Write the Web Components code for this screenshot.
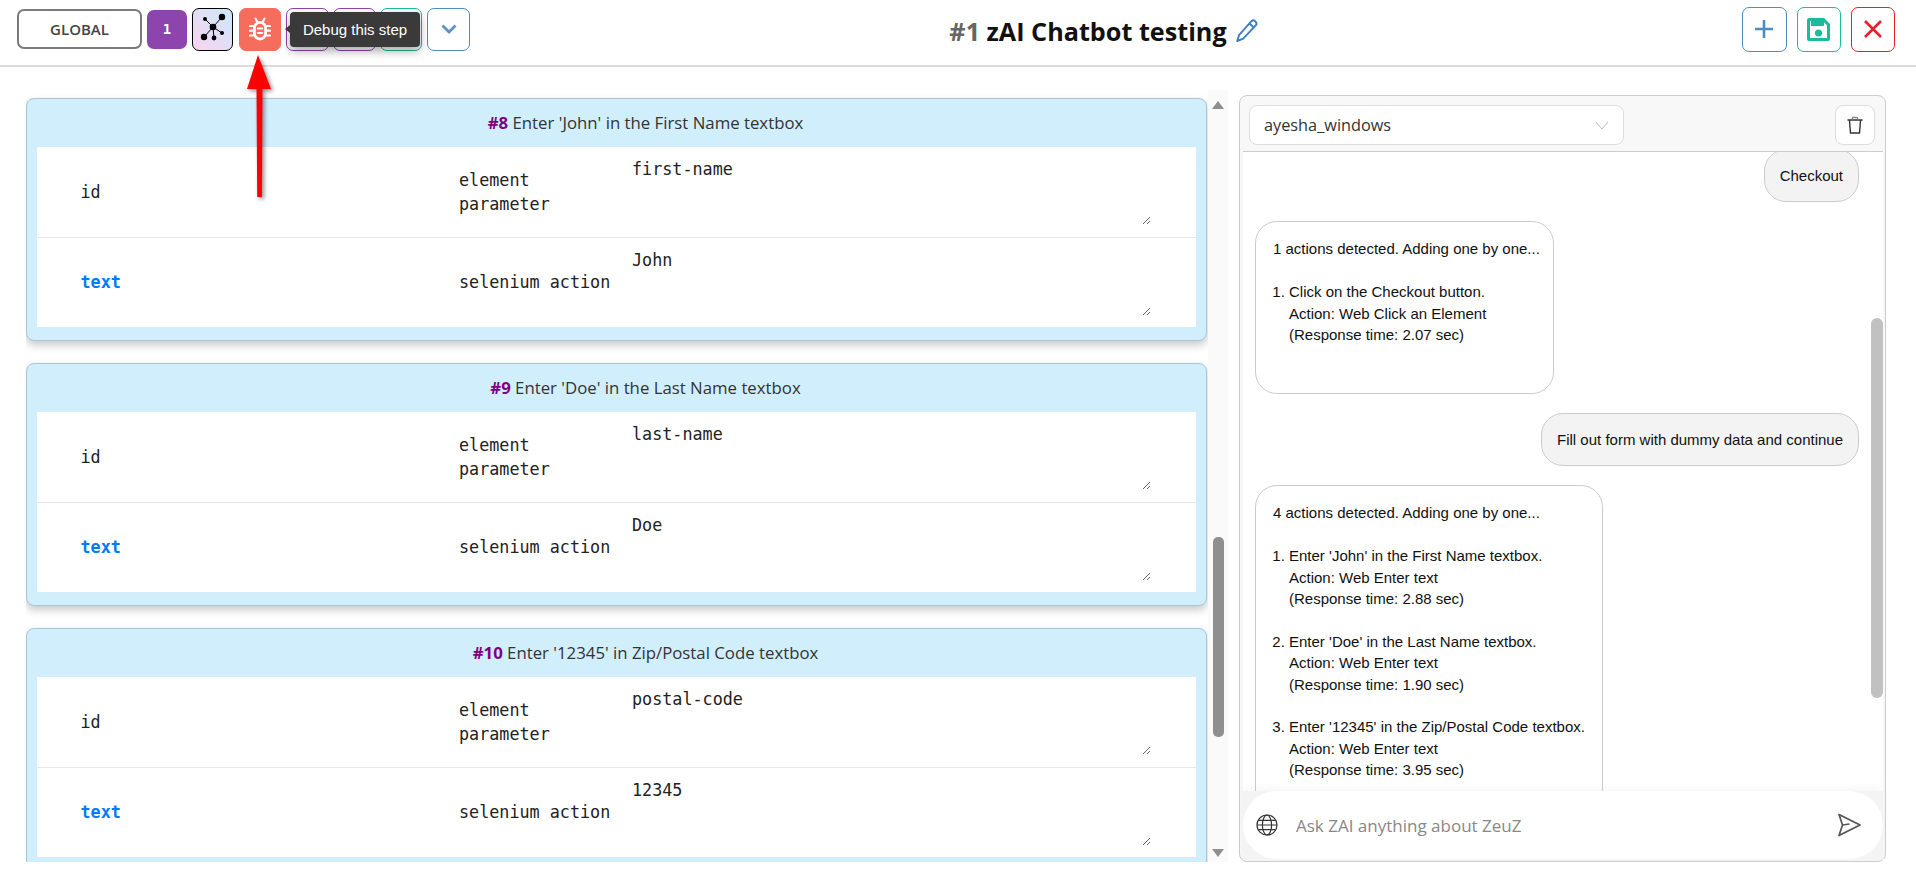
<!DOCTYPE html>
<html>
<head>
<meta charset="utf-8">
<title>zAI Chatbot testing</title>
<style>
  html, body { margin: 0; height: 100%; background: #fff; overflow: hidden; }
  body { font-family: "Open Sans", "Liberation Sans", sans-serif; }
</style>
</head>
<body>
<test-page></test-page>
<script>
class IconBtn extends HTMLElement {
  connectedCallback() {
    this.attachShadow({ mode: 'open' });
    this.shadowRoot.innerHTML = `
      <style>
        :host {
          display: flex;
          align-items: center;
          justify-content: center;
          box-sizing: border-box;
          width: var(--w, 43px);
          height: var(--h, 43px);
          border: 1px solid var(--c, #4f8cc0);
          border-radius: 7px;
          background: var(--bg, #fff);
          flex: none;
        }
      </style>
      <slot></slot>
    `;
  }
}
customElements.define('icon-btn', IconBtn);

class AppHeader extends HTMLElement {
  connectedCallback() {
    this.attachShadow({ mode: 'open' });
    this.shadowRoot.innerHTML = `
      <style>
        :host {
          display: flex;
          align-items: center;
          justify-content: space-between;
          box-sizing: border-box;
          height: 67px;
          padding: 0 21px 7px 17px;
          border-bottom: 2px solid #dcdcdc;
          background: #fff;
          position: relative;
        }
        .tools { display: flex; align-items: center; }
        .global {
          box-sizing: border-box;
          width: 125px;
          height: 40px;
          border: 2px solid #7a7a7a;
          border-radius: 7px;
          display: flex;
          align-items: center;
          justify-content: center;
          font: 600 15px "Open Sans", sans-serif;
          color: #444;
          margin-right: 5px;
        }
        .count {
          width: 40px;
          height: 39px;
          border-radius: 7px;
          background: #8e44ad;
          color: #fff;
          display: flex;
          align-items: center;
          justify-content: center;
          font: bold 14px "DejaVu Sans Mono", monospace;
          margin-right: 5px;
        }
        .graph { --w: 41px; --c: #000; --bg: linear-gradient(45deg, #fbd3ee, #c9e9fc); margin-right: 6px; }
        .bug { --w: 42px; --c: #f66c5d; --bg: #f66c5d; margin-right: 5px; }
        .mid { margin-right: 4px; --c: #8e44ad; }
        .teal { margin-right: 5px; --w: 42px; --c: #1abc9c; }
        .tip {
          position: absolute;
          left: 290px;
          top: 12px;
          width: 130px;
          height: 35px;
          box-sizing: border-box;
          background: #3a3a3a;
          color: #fff;
          border-radius: 4px;
          font: 15px "Liberation Sans", sans-serif;
          display: flex;
          align-items: center;
          justify-content: center;
          box-shadow: 0 4px 10px rgba(0,0,0,.35);
        }
        .tip:before {
          content: '';
          position: absolute;
          left: -5px;
          top: 13px;
          border-style: solid;
          border-width: 4.5px 5px 4.5px 0;
          border-color: transparent #3a3a3a transparent transparent;
        }
        h1 {
          margin: 3px 4px 0 0;
          font: bold 25.2px "Open Sans", sans-serif;
          color: #111;
          display: flex;
          align-items: center;
          white-space: pre;
        }
        h1 span { color: #666; }
        h1 svg { margin-left: 8px; }
        .right { display: flex; gap: 10px; align-items: center; }
        .right icon-btn { --w: 45px; --h: 45px; }
        .right .save { --w: 44px; --c: #1abc9c; }
        .right .close { --w: 44px; --c: #e8202a; }
      </style>
      <div class="tools">
        <div class="global">GLOBAL</div>
        <div class="count">1</div>
        <icon-btn class="graph">
          <svg width="39" height="41" viewBox="0 0 39 41">
            <g stroke="#000" stroke-width="1">
              <path d="M20 18 29 8M20 18 12 10M20 18 29 24M20 18 21 29M20 18 11 28"/>
            </g>
            <circle cx="20" cy="18" r="3.3"/><circle cx="29" cy="8" r="3.2"/><circle cx="12" cy="10" r="2"/>
            <circle cx="29" cy="24" r="2"/><circle cx="21" cy="29" r="2.4"/><circle cx="11" cy="28" r="3.2"/>
          </svg>
        </icon-btn>
        <icon-btn class="bug">
          <svg width="22" height="24" viewBox="0 0 22 24" fill="none" stroke="#fff" stroke-linecap="round">
            <rect x="5.4" y="5.4" width="11.2" height="16.6" rx="5.6" stroke-width="2.8"/>
            <path d="M8.8 11.5h4.4M8.8 16h4.4" stroke-width="2.2"/>
            <path d="M1 9h3M1 13.7h3M1 18.5h3M18 9h3M18 13.7h3M18 18.5h3" stroke-width="2.2"/>
            <path d="M6.5 1.5 8 4.5M15.5 1.5 14 4.5" stroke-width="2"/>
          </svg>
        </icon-btn>
        <icon-btn class="mid"></icon-btn>
        <icon-btn class="mid"></icon-btn>
        <icon-btn class="teal"></icon-btn>
        <icon-btn>
          <svg width="18" height="12" viewBox="0 0 18 12" fill="none" stroke="#5b93c6" stroke-width="2.8">
            <path d="M2.5 2.5 9 9l6.5-6.5"/>
          </svg>
        </icon-btn>
      </div>
      <div class="tip">Debug this step</div>
      <h1><span>#1 </span>zAI Chatbot testing<svg width="24" height="25" viewBox="0 0 24 25" fill="none" stroke="#3a7fc1" stroke-width="1.9" stroke-linejoin="round">
          <path d="M16.5 3.2a2.6 2.6 0 0 1 3.6 0l.6.6a2.6 2.6 0 0 1 0 3.6L8.2 20.6 2.2 23l2-6.2zM14.5 5.5l4.6 4.2"/>
        </svg></h1>
      <div class="right">
        <icon-btn>
          <svg width="20" height="20" viewBox="0 0 20 20" stroke="#4f8cc0" stroke-width="2.6"><path d="M10 1v18M1 10h18"/></svg>
        </icon-btn>
        <icon-btn class="save">
          <svg width="23" height="23" viewBox="0 0 23 23">
            <path fill="#1abc9c" fill-rule="evenodd" d="M2 0h15l6 6v15a2 2 0 0 1-2 2H2a2 2 0 0 1-2-2V2a2 2 0 0 1 2-2zM3 3v17h17V7.2L15.8 3z"/>
            <rect x="4" y="3" width="13" height="5" fill="#1abc9c"/>
            <circle cx="11.5" cy="15" r="3.6" fill="#1abc9c"/>
          </svg>
        </icon-btn>
        <icon-btn class="close">
          <svg width="18" height="18" viewBox="0 0 18 18" stroke="#e8202a" stroke-width="2.6"><path d="M1 1l16 16M17 1 1 17"/></svg>
        </icon-btn>
      </div>
    `;
  }
}
customElements.define('app-header', AppHeader);

class StepRow extends HTMLElement {
  connectedCallback() {
    const kind = this.getAttribute('kind');
    const name = this.getAttribute('name');
    const value = this.getAttribute('value');
    this.attachShadow({ mode: 'open' });
    this.shadowRoot.innerHTML = `
      <style>
        :host {
          display: grid;
          grid-template-columns: 422px 174px 1fr;
          align-items: center;
          box-sizing: border-box;
          height: 89px;
          padding-bottom: 2px;
          background: #fff;
          font: 16.75px/24px "DejaVu Sans Mono", "Liberation Mono", monospace;
          color: #222;
        }
        :host(:not(:last-child)) { height: 91px; padding-bottom: 0; border-bottom: 1px solid #e8e8e8; }
        .kind { padding-left: 43.5px; }
        :host([link]) .kind { color: #007bff; font-weight: bold; }
        .name { width: 160px; }
        textarea {
          display: block;
          box-sizing: border-box;
          align-self: start;
          width: 519px;
          height: 68px;
          margin: 10px 0 0 -1px;
          padding: 0;
          border: 0;
          outline: 0;
          background: transparent;
          color: #222;
          font: inherit;
          resize: vertical;
          overflow: hidden;
        }
      </style>
      <div class="kind">${kind}</div>
      <div class="name">${name}</div>
      <textarea>${value}</textarea>
    `;
  }
}
customElements.define('step-row', StepRow);

class StepCard extends HTMLElement {
  connectedCallback() {
    this.attachShadow({ mode: 'open' });
    this.shadowRoot.innerHTML = `
      <style>
        :host {
          display: block;
          flex: none;
          box-sizing: border-box;
          width: 1181px;
          height: 243px;
          padding: 0 10px 13px;
          background: #d1eefd;
          border: 1px solid #a8c6d8;
          border-radius: 8px;
          box-shadow: 0 4px 9px rgba(0,0,0,.22);
        }
        .head {
          height: 48px;
          box-sizing: border-box;
          padding: 0 0 2px 58px;
          display: flex;
          align-items: center;
          justify-content: center;
          white-space: pre;
          font: 16.8px "Open Sans", sans-serif;
          color: #333;
        }
        b { color: #800080; }
      </style>
      <div class="head"><b>#${this.getAttribute('num')}</b> ${this.getAttribute('label')}</div>
      <slot></slot>
    `;
  }
}
customElements.define('step-card', StepCard);

class StepList extends HTMLElement {
  connectedCallback() {
    this.attachShadow({ mode: 'open' });
    this.shadowRoot.innerHTML = `
      <style>
        :host {
          display: flex;
          flex: none;
          box-sizing: border-box;
          width: 1202px;
          margin-top: 23px;
          background: #fff;
          overflow: hidden;
        }
        .cards {
          flex: none;
          width: 1182px;
          display: flex;
          flex-direction: column;
          gap: 22px;
          padding: 8px 0 0;
          overflow: hidden;
        }
        .rail {
          flex: 1;
          display: flex;
          flex-direction: column;
          align-items: center;
          background: #fafafa;
          padding: 11px 0 5px;
        }
        .up, .down { width: 0; height: 0; border-style: solid; border-color: transparent; }
        .up { border-width: 0 6.5px 8px; border-bottom-color: #8f8f8f; }
        .down { border-width: 8px 6.5px 0; border-top-color: #8f8f8f; }
        .thumb { width: 11px; height: 200px; margin-top: 428px; border-radius: 5px; background: #8f8f8f; flex: none; }
        .space { flex: 1; }
      </style>
      <div class="cards"><slot></slot></div>
      <div class="rail">
        <div class="up"></div>
        <div class="thumb"></div>
        <div class="space"></div>
        <div class="down"></div>
      </div>
    `;
  }
}
customElements.define('step-list', StepList);

class ChatBubble extends HTMLElement {
  connectedCallback() {
    this.attachShadow({ mode: 'open' });
    this.shadowRoot.innerHTML = `
      <style>
        :host {
          display: block;
          flex: none;
          box-sizing: border-box;
          width: fit-content;
          border: 1px solid #ccc;
          border-radius: 22px;
          background: #fff;
          padding: 16px 17px;
          font: 15px/21.4px "Liberation Sans", Arial, sans-serif;
          color: #111;
        }
        :host([me]) {
          align-self: flex-end;
          background: #f3f3f3;
          padding: 15px;
        }
      </style>
      <slot></slot>
    `;
  }
}
customElements.define('chat-bubble', ChatBubble);

class ChatPanel extends HTMLElement {
  connectedCallback() {
    this.attachShadow({ mode: 'open' });
    this.shadowRoot.innerHTML = `
      <style>
        :host {
          display: flex;
          flex-direction: column;
          flex: none;
          box-sizing: border-box;
          width: 647px;
          margin-top: 28px;
          border: 1px solid #ccc;
          border-radius: 8px;
          background: #f8f8f8;
          padding: 0 2px 1px 3px;
          overflow: hidden;
        }
        .top {
          flex: none;
          height: 56px;
          box-sizing: border-box;
          padding: 9px 8px 0 6px;
          display: flex;
          justify-content: space-between;
          border-bottom: 1px solid #ccc;
        }
        .select, .trash {
          box-sizing: border-box;
          height: 40px;
          background: #fff;
          border: 1px solid #ddd;
          border-radius: 8px;
          display: flex;
          align-items: center;
        }
        .select {
          width: 375px;
          justify-content: space-between;
          padding: 0 14px;
          font: 16.3px "Open Sans", sans-serif;
          color: #333;
        }
        .trash { width: 40px; justify-content: center; }
        .body {
          flex: 1;
          min-height: 0;
          display: flex;
          background: #fff;
          overflow: hidden;
        }
        .msgs {
          flex: 1;
          min-width: 0;
          display: flex;
          flex-direction: column;
          gap: 19px;
          padding: 0 0 0 12px;
          margin-top: -3px;
        }
        .rail { flex: none; width: 24px; padding: 166px 0 0 12px; box-sizing: border-box; }
        .thumb { width: 12px; height: 380px; border-radius: 6px; background: #c1c1c1; }
        .foot {
          flex: none;
          position: relative;
          height: 69px;
          box-sizing: border-box;
          padding: 0 0 1px;
          background: #f4f4f4;
          box-shadow: 0 -3px 8px rgba(0,0,0,.04);
        }
        .pill {
          height: 68px;
          box-sizing: border-box;
          border-radius: 34px;
          background: #fff;
          display: flex;
          align-items: center;
          padding: 0 22px 0 13px;
          font: 17px "Open Sans", sans-serif;
          color: #888;
        }
        .pill .ph { flex: 1; margin-left: 18px; }
      </style>
      <div class="top">
        <div class="select">
          <span>ayesha_windows</span>
          <svg width="14" height="9" viewBox="0 0 14 9" fill="none" stroke="#bbb"><path d="M1 1l6 7 6-7"/></svg>
        </div>
        <div class="trash">
          <svg width="18" height="18" viewBox="0 0 18 18" fill="none" stroke="#333" stroke-width="1.4">
            <path d="M1.5 4h15M3.5 4.5l1 12.5h9l1-12.5"/>
            <path d="M6 3.5 7 1.5h4l1 2" stroke="#888"/>
          </svg>
        </div>
      </div>
      <div class="body">
        <div class="msgs"><slot></slot></div>
        <div class="rail"><div class="thumb"></div></div>
      </div>
      <div class="foot">
        <div class="pill">
          <svg width="22" height="22" viewBox="0 0 22 22" fill="none" stroke="#333" stroke-width="1.2">
            <circle cx="11" cy="11" r="10"/>
            <ellipse cx="11" cy="11" rx="4.6" ry="10"/>
            <path d="M1 11h20M2.2 6.3h17.6M2.2 15.7h17.6"/>
          </svg>
          <span class="ph">Ask ZAI anything about ZeuZ</span>
          <svg width="24" height="24" viewBox="0 0 24 24" fill="none" stroke="#555" stroke-width="1.7" stroke-linejoin="round">
            <path d="M2 1.5 23 12 2 22.5 5.5 12zM5.5 12l7-1"/>
          </svg>
        </div>
      </div>
    `;
  }
}
customElements.define('chat-panel', ChatPanel);

class ActionList extends HTMLElement {
  connectedCallback() {
    const items = JSON.parse(this.getAttribute('items'));
    this.attachShadow({ mode: 'open' });
    this.shadowRoot.innerHTML = `
      <style>
        :host { display: block; white-space: nowrap; }
        ol { margin: 21.4px 0 0; padding-left: 16px; }
        li { margin-bottom: 21.4px; }
      </style>
      <div>${this.getAttribute('lead')}</div>
      <ol>${items.map(i => `<li>${i[0]}<br>Action: ${i[1]}<br>(Response time: ${i[2]} sec)</li>`).join('')}</ol>
    `;
  }
}
customElements.define('action-list', ActionList);

class DebugArrow extends HTMLElement {
  connectedCallback() {
    this.attachShadow({ mode: 'open' });
    this.shadowRoot.innerHTML = `
      <style>
        :host { position: absolute; left: 240px; top: 50px; width: 40px; height: 156px; filter: drop-shadow(2px 2px 2px rgba(0,0,0,.45)); }
      </style>
      <svg width="40" height="156" viewBox="0 0 40 156">
        <path fill="#f00" d="M18 5 31 39H22.5L22 147H17.2L16.5 39H7z"/>
      </svg>
    `;
  }
}
customElements.define('debug-arrow', DebugArrow);

class TestPage extends HTMLElement {
  connectedCallback() {
    this.attachShadow({ mode: 'open' });
    this.shadowRoot.innerHTML = `
      <style>
        :host { display: block; position: relative; height: 885px; overflow: hidden; background: #fff; }
        main { display: flex; gap: 11px; height: 795px; padding-left: 26px; box-sizing: border-box; }
      </style>
      <app-header></app-header>
      <main>
        <step-list>
          <step-card num="8" label="Enter 'John' in the First Name textbox">
            <step-row kind="id" name="element parameter" value="first-name"></step-row>
            <step-row link kind="text" name="selenium action" value="John"></step-row>
          </step-card>
          <step-card num="9" label="Enter 'Doe' in the Last Name textbox">
            <step-row kind="id" name="element parameter" value="last-name"></step-row>
            <step-row link kind="text" name="selenium action" value="Doe"></step-row>
          </step-card>
          <step-card num="10" label="Enter '12345' in Zip/Postal Code textbox">
            <step-row kind="id" name="element parameter" value="postal-code"></step-row>
            <step-row link kind="text" name="selenium action" value="12345"></step-row>
          </step-card>
        </step-list>
        <chat-panel>
          <chat-bubble me>Checkout</chat-bubble>
          <chat-bubble style="width:299px;height:172.6px">
            <action-list lead="1 actions detected. Adding one by one..."
              items='[["Click on the Checkout button.","Web Click an Element","2.07"]]'></action-list>
          </chat-bubble>
          <chat-bubble me>Fill out form with dummy data and continue</chat-bubble>
          <chat-bubble>
            <action-list lead="4 actions detected. Adding one by one..."
              items='[["Enter &apos;John&apos; in the First Name textbox.","Web Enter text","2.88"],["Enter &apos;Doe&apos; in the Last Name textbox.","Web Enter text","1.90"],["Enter &apos;12345&apos; in the Zip/Postal Code textbox.","Web Enter text","3.95"]]'></action-list>
          </chat-bubble>
        </chat-panel>
      </main>
      <debug-arrow></debug-arrow>
    `;
  }
}
customElements.define('test-page', TestPage);
</script>
</body>
</html>
